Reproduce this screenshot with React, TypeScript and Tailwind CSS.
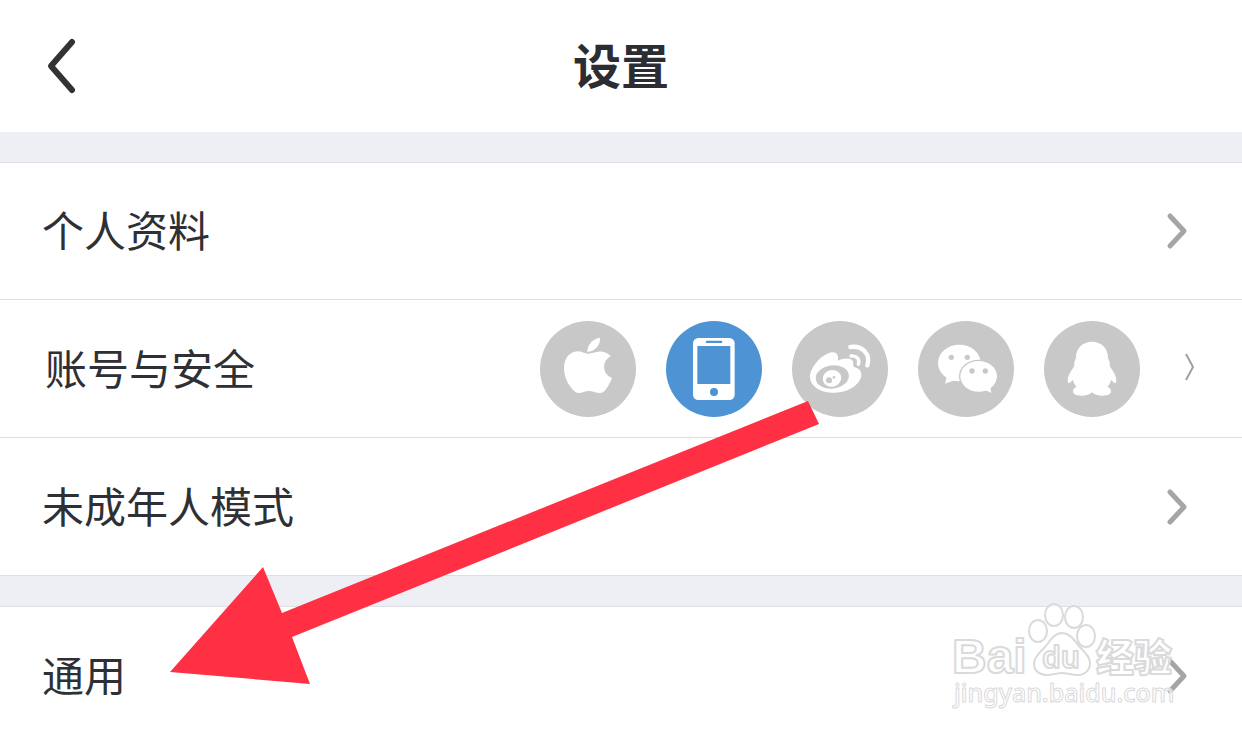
import React from "react";

function AppleIcon() {
  return (
    <svg className="size-24" viewBox="30 33 288 288" fill="#ffffff">
      <path d="M172 126C172 104 188 86 210 83C212 104 196 124 172 126Z" />
      <path d="M174 131C188 131 205 122 218 125C229 127 237 132 242 139C226 148 221 162 223 177C225 190 233 199 246 204C240 221 231 236 220 246C208 254 192 243 176 243C162 243 148 254 136 246C118 232 102 204 102 175C102 145 119 125 142 124C156 124 164 131 174 131Z" />
    </svg>
  );
}

function PhoneIcon() {
  return (
    <svg className="size-24" viewBox="408 33 288 288" fill="#4e94d4">
      <rect x="489" y="84" width="125" height="186" rx="16" fill="#ffffff" />
      <rect x="527" y="92" width="50" height="7" rx="3" />
      <rect x="502" y="108" width="99" height="114" />
      <circle cx="552" cy="246" r="12" />
    </svg>
  );
}

function WeiboIcon() {
  return (
    <svg className="size-24" viewBox="36 33 288 288" fill="#ffffff">
      <path d="M90 200C91 172 122 136 150 128C167 123 178 133 173 152C190 145 207 142 217 151C223 158 216 168 224 172C236 175 245 183 244 196C241 224 205 248 165 248C126 249 91 232 90 200Z" />
      <ellipse cx="157" cy="201" rx="50" ry="35" fill="#c8c8c8" transform="rotate(-8 157 201)" />
      <ellipse cx="156" cy="205" rx="28" ry="25" transform="rotate(-15 156 205)" />
      <circle cx="147" cy="211" r="9" fill="#c8c8c8" />
      <circle cx="162" cy="202" r="4" fill="#c8c8c8" />
      <g fill="none" stroke="#ffffff" strokeLinecap="round">
        <path d="M211 111C248 106 273 134 262 166" strokeWidth="13" />
        <path d="M213 138C230 136 241 148 235 163" strokeWidth="10" />
      </g>
    </svg>
  );
}

function WechatIcon() {
  return (
    <svg className="size-24" viewBox="414 33 288 288" fill="#ffffff">
      <ellipse cx="538" cy="159" rx="64" ry="55" />
      <path d="M501 198L495 221L526 210Z" />
      <circle cx="514" cy="142" r="8" fill="#c8c8c8" />
      <circle cx="562" cy="142" r="8" fill="#c8c8c8" />
      <ellipse cx="596" cy="199" rx="57" ry="48" stroke="#c8c8c8" strokeWidth="4" />
      <path d="M616 240L634 249L630 228Z" />
      <circle cx="576" cy="183" r="8" fill="#c8c8c8" />
      <circle cx="616" cy="183" r="8" fill="#c8c8c8" />
    </svg>
  );
}

function QQIcon() {
  return (
    <svg className="size-24" viewBox="42 33 288 288" fill="#ffffff">
      <path d="M186 95C158 95 138 115 138 142C138 150 131 153 133 166C133 173 113 192 113 211C113 216 115 220 118 220L129 210C131 220 135 226 140 231C131 234 129 238 129 244C129 254 140 257 153 257C168 257 180 254 186 247C192 254 204 257 219 257C232 257 243 254 243 244C243 238 241 234 232 231C237 226 241 220 243 210L254 220C257 220 259 216 259 211C259 192 239 173 239 166C241 153 234 150 234 142C234 115 214 95 186 95Z" />
    </svg>
  );
}

const accounts = [
  { name: "Apple", active: false, icon: <AppleIcon /> },
  { name: "手机", active: true, icon: <PhoneIcon /> },
  { name: "微博", active: false, icon: <WeiboIcon /> },
  { name: "微信", active: false, icon: <WechatIcon /> },
  { name: "QQ", active: false, icon: <QQIcon /> },
];

function Chevron() {
  return (
    <svg
      className="mr-[10px] h-10 w-6 shrink-0"
      viewBox="0 0 24 40"
      fill="none"
      stroke="#a5a5a8"
      strokeWidth={5}
      strokeLinecap="round"
      strokeLinejoin="round"
    >
      <path d="M6 5L20 20L6 35" />
    </svg>
  );
}

function SmallChevron() {
  return (
    <svg className="ml-[42px] h-8 w-4 shrink-0" viewBox="0 0 16 32" fill="none" stroke="#a0a0a3" strokeWidth={2}>
      <path d="M4 1L11 14L4 27" />
    </svg>
  );
}

function Row({ label, className, children }: { label: string; className: string; children?: React.ReactNode }) {
  return (
    <li className="border-b border-[#dedfe3]">
      <button
        type="button"
        className={`flex w-full items-center justify-between pr-11 text-left text-[42px] leading-14 text-[#2f3035] ${className}`}
      >
        <span className="pt-1">{label}</span>
        {children || <Chevron />}
      </button>
    </li>
  );
}

function Watermark() {
  return (
    <svg
      className="pointer-events-none absolute right-[60px] top-[598px] h-[120px] w-[232px]"
      viewBox="0 0 232 120"
      fill="#ffffff"
      fillOpacity={0.7}
      stroke="#dadadc"
      strokeWidth={2}
      strokeLinejoin="round"
    >
      <ellipse cx="88" cy="33" rx="9" ry="11" />
      <ellipse cx="104" cy="17" rx="9" ry="11" />
      <ellipse cx="124" cy="19" rx="9" ry="11" />
      <ellipse cx="136" cy="38" rx="9" ry="11" />
      <path d="M112 35C104 35 100 43 95 49C89 55 84 60 84 66C84 73 90 77 97 77C103 77 107 75 112 75C117 75 122 77 128 77C135 77 140 72 140 65C140 58 134 54 129 48C124 42 120 35 112 35Z" />
      <text x="2" y="75" className="font-['Liberation_Sans',sans-serif] text-[48px] font-bold">Bai</text>
      <text x="92" y="70" className="font-['Noto_Sans',sans-serif] text-[30px] font-semibold">du</text>
      <text x="146" y="73" className="font-['Noto_Sans_CJK_SC',sans-serif] text-[38px] font-black">经验</text>
      <text x="4" y="104" strokeWidth={1} className="font-['Noto_Sans',sans-serif] text-[25px] font-medium">jingyan.baidu.com</text>
    </svg>
  );
}

export default function App() {
  return (
    <div className="relative overflow-hidden bg-white font-['Liberation_Sans','Noto_Sans_CJK_SC',sans-serif]">
      {/* Title bar */}
      <header className="grid h-[132px] grid-cols-[1fr_auto_1fr] items-center px-[42px]">
        <button type="button" aria-label="返回" className="w-10">
          <svg
            className="h-15 w-10"
            viewBox="0 0 40 60"
            fill="none"
            stroke="#333335"
            strokeWidth={6}
            strokeLinecap="round"
            strokeLinejoin="round"
          >
            <path d="M30 6L9 30L30 54" />
          </svg>
        </button>
        <h1 className="pt-1 text-5xl font-bold text-[#2b2d32]">设置</h1>
      </header>

      <main>
        <div className="h-[31px] border-b border-[#dedfe3] bg-[#eeeff4]" />
        <ul>
          <Row label="个人资料" className="min-h-[136px] pl-[42px]" />
          <Row label="账号与安全" className="min-h-[137px] pl-[45px]">
            <span className="flex items-center">
              <span className="flex gap-[30px]">
                {accounts.map((account) => (
                  <span
                    key={account.name}
                    role="img"
                    aria-label={account.name}
                    className={`size-24 rounded-full ${account.active ? "bg-[#4e94d4]" : "bg-[#c8c8c8]"}`}
                  >
                    {account.icon}
                  </span>
                ))}
              </span>
              <SmallChevron />
            </span>
          </Row>
          <Row label="未成年人模式" className="min-h-[137px] pl-[42px]" />
        </ul>
        <div className="h-[31px] border-b border-[#dedfe3] bg-[#eeeff4]" />
        <ul>
          <Row label="通用" className="min-h-[137px] pl-[42px]" />
        </ul>
      </main>

      <Watermark />

      {/* Arrow pointing at the last row */}
      <svg className="pointer-events-none absolute left-[170px] top-[400px] h-[285px] w-[650px]" viewBox="170 400 650 285" fill="#ff3043">
        <path d="M170 672L263 567L282 613L808 401L819 424L292 637L310 684Z" />
      </svg>
    </div>
  );
}
